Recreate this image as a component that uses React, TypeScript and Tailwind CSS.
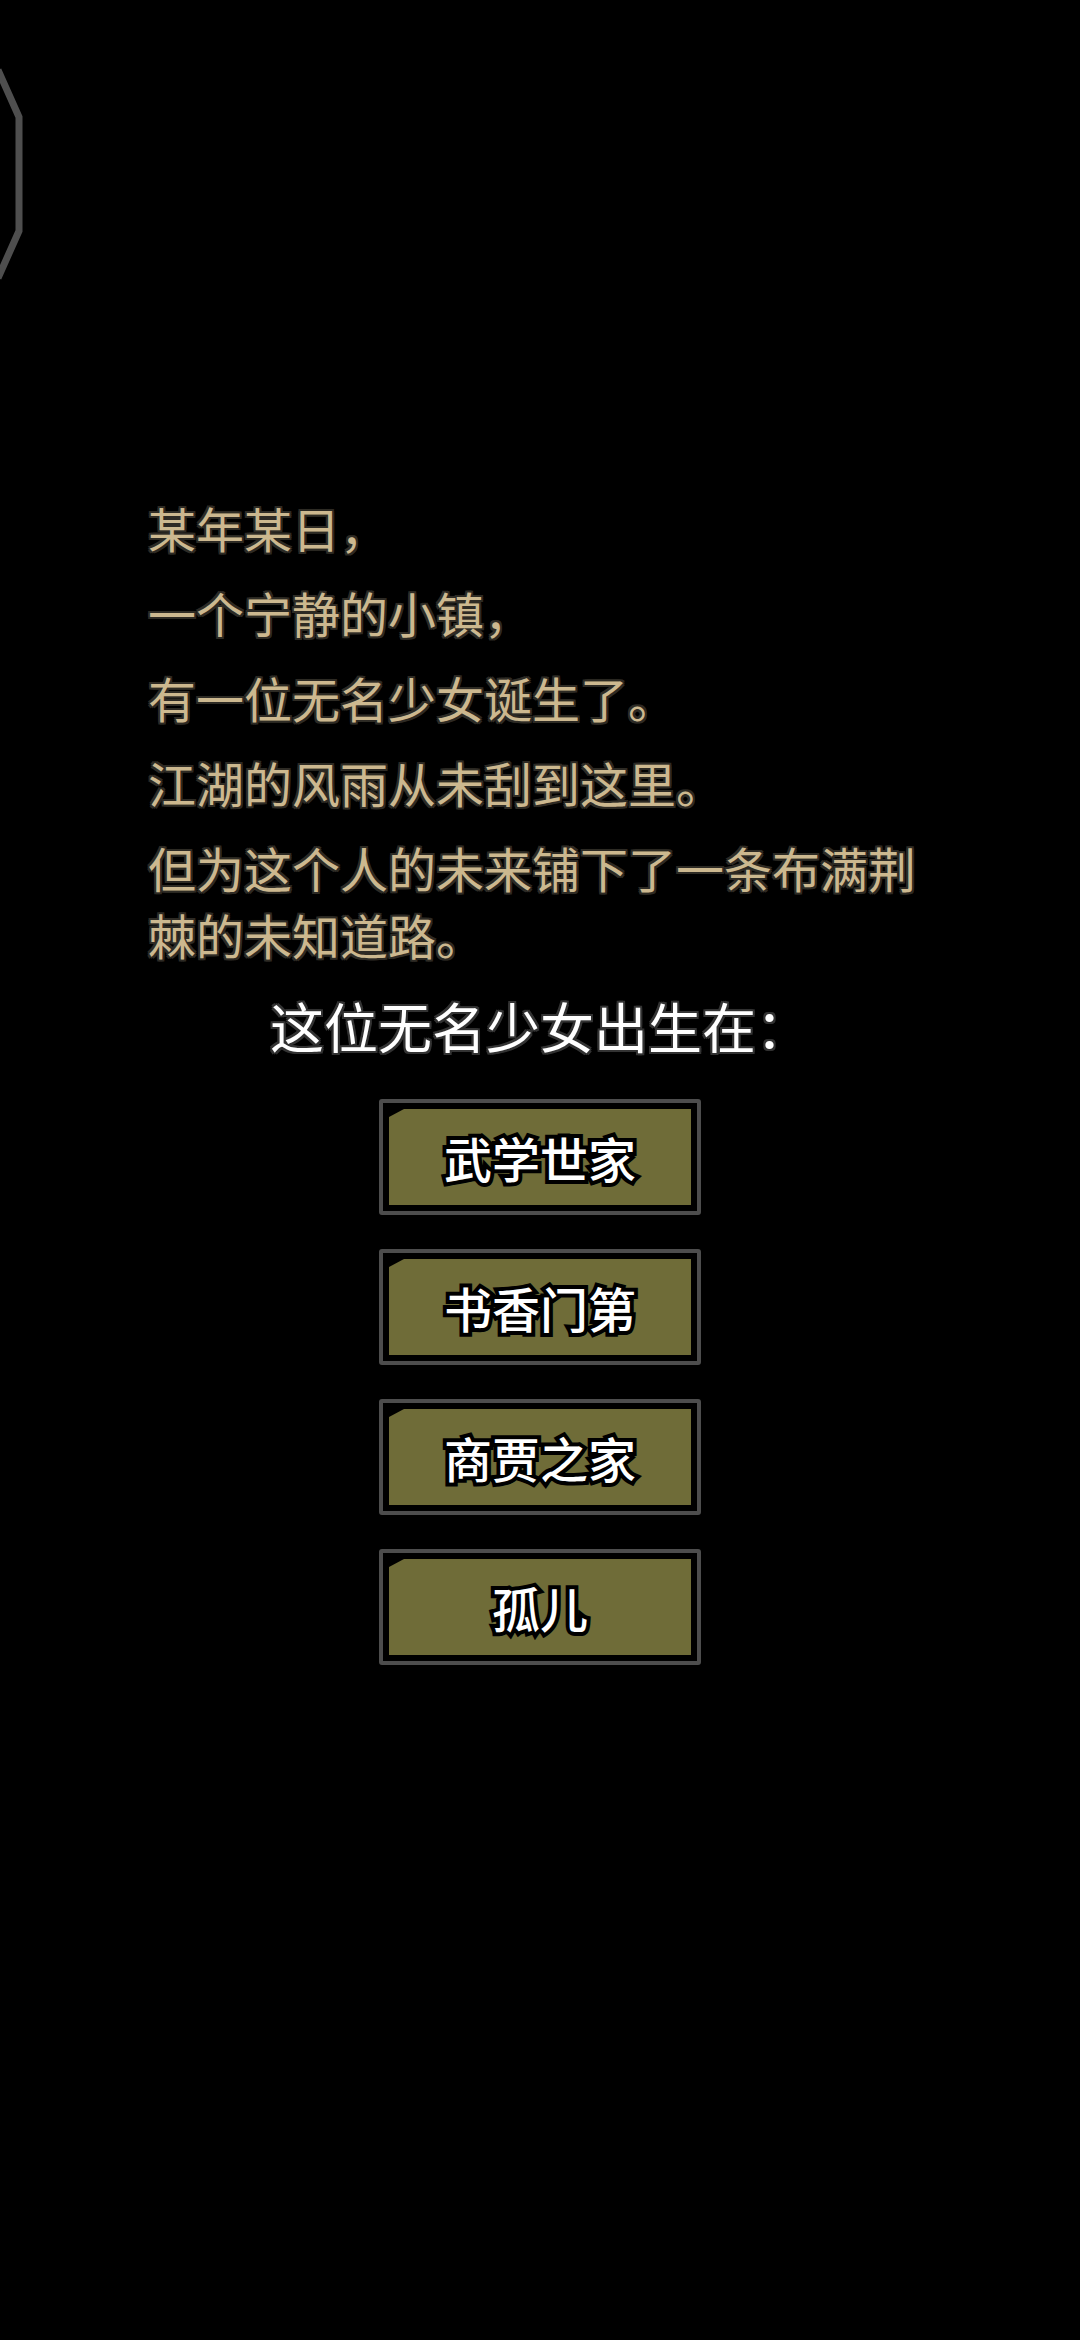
import React from "react";

const lines = [
  "某年某日，",
  "一个宁静的小镇，",
  "有一位无名少女诞生了。",
  "江湖的风雨从未刮到这里。",
  "但为这个人的未来铺下了一条布满荆棘的未知道路。",
];

const options = ["武学世家", "书香门第", "商贾之家", "孤儿"];

function OptionButton({ label }: { label: string }) {
  return (
    <button className="w-[322px] h-[116px] rounded-[3px] border-[4px] border-[#4d4d4d] bg-black p-[6px] block">
      <div className="w-full h-full bg-[#6f6c38] [clip-path:polygon(15px_0,100%_0,100%_100%,0_100%,0_8px)] flex items-center justify-center">
        <span className="text-[48px] leading-none font-medium text-white [-webkit-text-stroke:8px_#000] [paint-order:stroke_fill] [text-shadow:2px_3px_0_#000]">
          {label}
        </span>
      </div>
    </button>
  );
}

export default function App() {
  return (
    <div className="relative w-[1080px] min-h-[2340px] bg-black overflow-hidden [font-family:'Noto_Sans_CJK_SC','Noto_Sans',sans-serif]">
      <svg
        className="absolute left-0 top-0"
        width="60"
        height="320"
        viewBox="0 0 60 320"
        fill="none"
      >
        <polyline
          points="-2,70 19,117 19,231 -2,278"
          stroke="#4e4e4e"
          strokeWidth="7"
          strokeLinejoin="miter"
        />
      </svg>

      <main className="flex flex-col items-center pt-[494px]">
        <div className="w-[790px] flex flex-col gap-[18px] self-start pl-[148px] box-content">
          {lines.map((t) => (
            <p
              key={t}
              className="text-[48px] leading-[67px] text-[#ccb88f] [text-shadow:0_0_3px_#2e2b25,2px_2px_0_#2e2b25,-2px_-2px_0_#2e2b25,2px_-2px_0_#2e2b25,-2px_2px_0_#2e2b25,0_2px_0_#2e2b25,0_-2px_0_#2e2b25,2px_0_0_#2e2b25,-2px_0_0_#2e2b25]"
            >
              {t}
            </p>
          ))}
        </div>

        <h2 className="mt-[27px] text-[54px] leading-[62px] text-white font-normal [text-shadow:0_0_3px_#333,2px_2px_0_#333,-2px_-2px_0_#333,2px_-2px_0_#333,-2px_2px_0_#333,0_2px_0_#333,0_-2px_0_#333,2px_0_0_#333,-2px_0_0_#333]">
          这位无名少女出生在：
        </h2>

        <div className="mt-[42px] flex flex-col gap-[34px]">
          {options.map((o) => (
            <OptionButton key={o} label={o} />
          ))}
        </div>
      </main>
    </div>
  );
}
